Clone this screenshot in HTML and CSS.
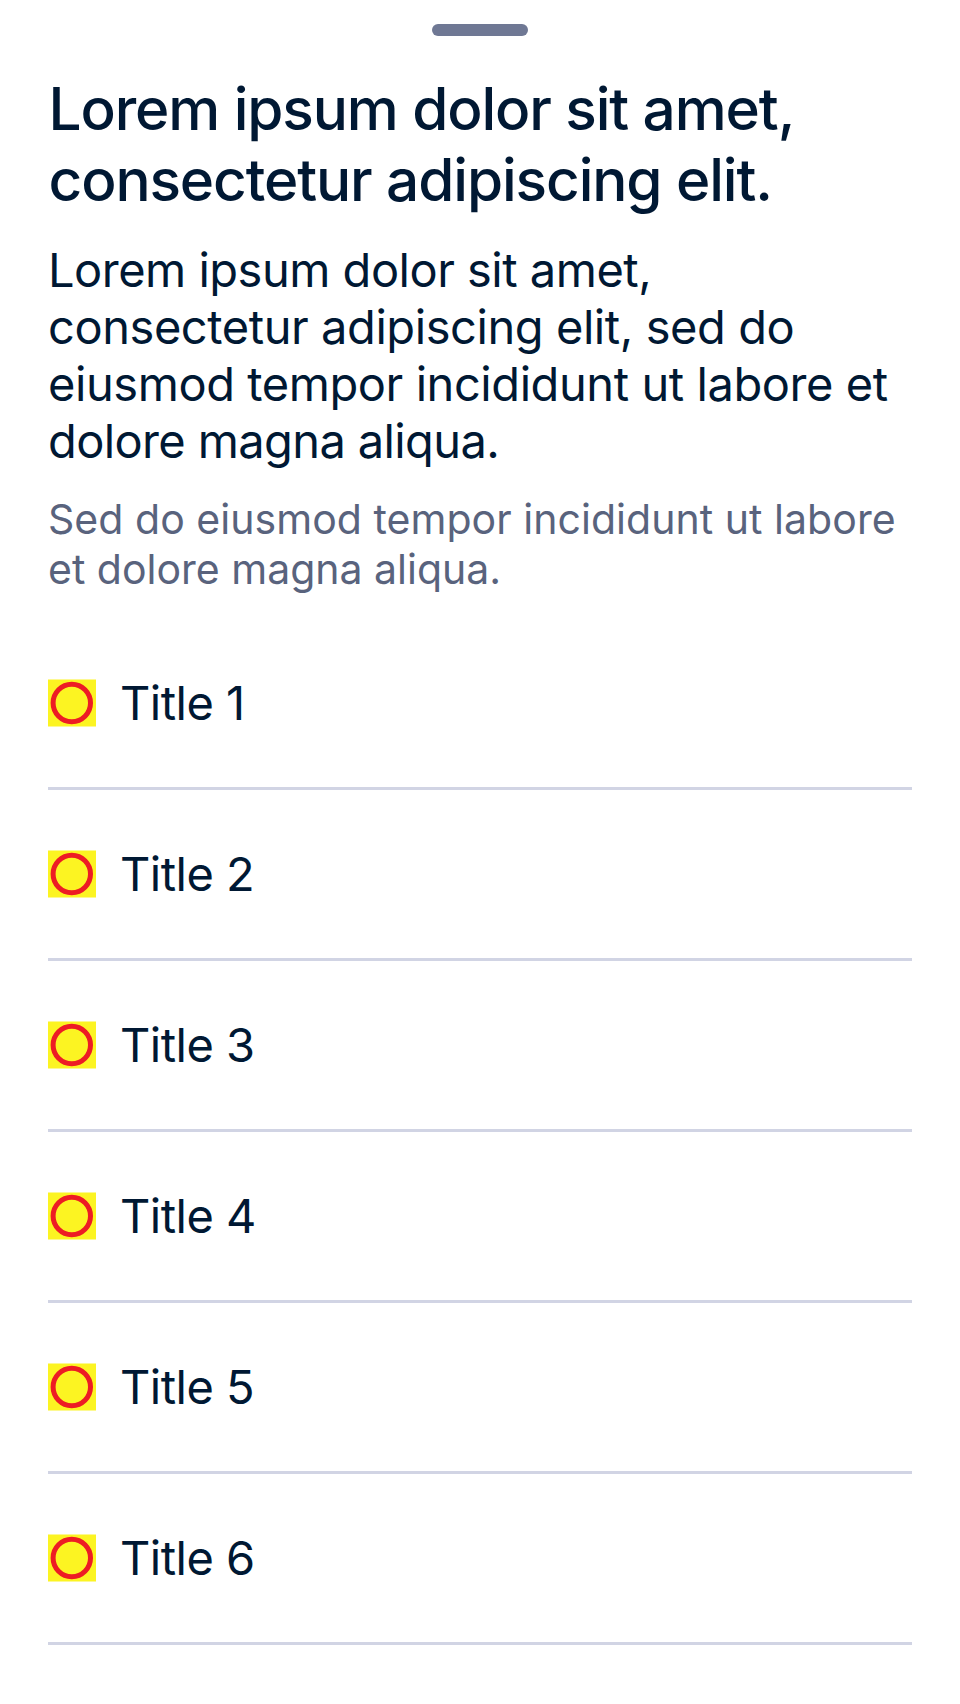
FILE: index.html
```html
<!DOCTYPE html>
<html lang="en">
<head>
<meta charset="utf-8">
<title>Bottom sheet</title>
<link rel="stylesheet" href="styles.css">
</head>
<body>
<main class="sheet">
<div class="handle"></div>
<h1 class="title">Lorem ipsum dolor sit amet,<br>consectetur adipiscing elit.</h1>
<p class="subtitle">Lorem ipsum dolor sit amet,<br><span class="wide">consectetur adipiscing elit, sed do<br>eiusmod tempor incididunt ut labore et</span><br><span class="tight">dolore magna aliqua.</span></p>
<p class="description"><span class="loose">Sed do eiusmod tempor incididunt ut labore</span><br>et dolore magna aliqua.</p>
<ul class="list">
<li class="row"><svg class="icon" viewBox="0 0 48 48"><rect y=".5" width="48" height="47"/><circle cx="23.8" cy="24" r="18.7"/></svg><span class="label">Title 1</span></li>
<li class="row"><svg class="icon" viewBox="0 0 48 48"><rect y=".5" width="48" height="47"/><circle cx="23.8" cy="24" r="18.7"/></svg><span class="label">Title 2</span></li>
<li class="row"><svg class="icon" viewBox="0 0 48 48"><rect y=".5" width="48" height="47"/><circle cx="23.8" cy="24" r="18.7"/></svg><span class="label">Title 3</span></li>
<li class="row"><svg class="icon" viewBox="0 0 48 48"><rect y=".5" width="48" height="47"/><circle cx="23.8" cy="24" r="18.7"/></svg><span class="label">Title 4</span></li>
<li class="row"><svg class="icon" viewBox="0 0 48 48"><rect y=".5" width="48" height="47"/><circle cx="23.8" cy="24" r="18.7"/></svg><span class="label">Title 5</span></li>
<li class="row"><svg class="icon" viewBox="0 0 48 48"><rect y=".5" width="48" height="47"/><circle cx="23.8" cy="24" r="18.7"/></svg><span class="label">Title 6</span></li>
</ul>
</main>
</body>
</html>
```
FILE: styles.css
```css
* { box-sizing: border-box; }
body { margin: 0; background: #fff; color: #001833; font-family: Inter, "Liberation Sans", sans-serif; }
.sheet { height: 1704px; padding: 24px 48px 0; overflow: hidden; }
.handle { width: 96px; height: 12px; margin: 0 auto; border-radius: 6px; background: #6f7894; }
.title { margin: 37px 0 0; padding-left: 0.5px; font-size: 58.5px; line-height: 71px; font-weight: 500; letter-spacing: -1.11px; white-space: nowrap; }
.subtitle { margin: 26px 0 0; font-size: 47px; line-height: 57px; white-space: nowrap; letter-spacing: -0.5px; }
.wide { letter-spacing: -0.43px; }
.tight { letter-spacing: -0.62px; }
.description { margin: 25px 0 0; font-size: 41px; line-height: 50px; color: #59637d; white-space: nowrap; }
.loose { letter-spacing: 0.04px; }
.list { margin: 25px 0 0; padding: 0; list-style: none; }
.row { height: 171px; display: flex; align-items: center; gap: 24px; border-bottom: 3px solid #d1d4e4; font-size: 47px; letter-spacing: -0.5px; }
.label { line-height: 56px; }
.icon { width: 48px; height: 48px; }
.icon rect { fill: #fcf422; }
.icon circle { fill: none; stroke: #ed1c24; stroke-width: 5; }
```
